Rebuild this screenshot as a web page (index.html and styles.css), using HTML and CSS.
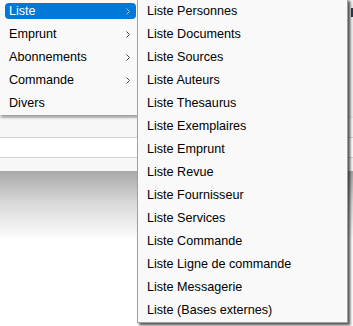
FILE: index.html
```html
<!DOCTYPE html>
<html lang="fr">
<head>
<meta charset="utf-8">
<title>Menu</title>
<link rel="stylesheet" href="styles.css">
</head>
<body>
<div class="page">
  <div class="toolbar"><span class="peek"></span></div>
  <div class="band band-light"></div>
  <div class="band band-white"></div>
  <div class="band band-light band-short"></div>
  <div class="fade"></div>
</div>

<ul class="menu main-menu">
  <li class="item active"><span>Liste</span><svg class="chev" viewBox="0 0 4 7" width="4" height="7"><path d="M0.5 0.5 L3.5 3.5 L0.5 6.5" fill="none" stroke="currentColor" stroke-width="1"/></svg></li>
  <li class="item"><span>Emprunt</span><svg class="chev" viewBox="0 0 4 7" width="4" height="7"><path d="M0.5 0.5 L3.5 3.5 L0.5 6.5" fill="none" stroke="currentColor" stroke-width="1"/></svg></li>
  <li class="item"><span>Abonnements</span><svg class="chev" viewBox="0 0 4 7" width="4" height="7"><path d="M0.5 0.5 L3.5 3.5 L0.5 6.5" fill="none" stroke="currentColor" stroke-width="1"/></svg></li>
  <li class="item"><span>Commande</span><svg class="chev" viewBox="0 0 4 7" width="4" height="7"><path d="M0.5 0.5 L3.5 3.5 L0.5 6.5" fill="none" stroke="currentColor" stroke-width="1"/></svg></li>
  <li class="item"><span>Divers</span></li>
</ul>

<ul class="menu sub-menu">
  <li class="sub-item">Liste Personnes</li>
  <li class="sub-item">Liste Documents</li>
  <li class="sub-item">Liste Sources</li>
  <li class="sub-item">Liste Auteurs</li>
  <li class="sub-item">Liste Thesaurus</li>
  <li class="sub-item">Liste Exemplaires</li>
  <li class="sub-item">Liste Emprunt</li>
  <li class="sub-item">Liste Revue</li>
  <li class="sub-item">Liste Fournisseur</li>
  <li class="sub-item">Liste Services</li>
  <li class="sub-item">Liste Commande</li>
  <li class="sub-item">Liste Ligne de commande</li>
  <li class="sub-item">Liste Messagerie</li>
  <li class="sub-item">Liste (Bases externes)</li>
</ul>
</body>
</html>
```
FILE: styles.css
```css
html, body {
  margin: 0;
  padding: 0;
  background: #ffffff;
  font-family: Tahoma, "Liberation Sans", Arial, sans-serif;
  font-size: 12.6px;
  color: #000;
  overflow: hidden;
}

.page {
  display: flex;
  flex-direction: column;
  width: 353px;
  height: 326px;
}

.toolbar {
  height: 117px;
  background: #f0f0f0;
  border-bottom: 1px solid #e0e0e0;
  display: flex;
  justify-content: flex-end;
  align-items: flex-start;
}

.peek {
  width: 2px;
  height: 9px;
  margin-top: 8px;
  background: #2a3a50;
}

.band {
  height: 19px;
  border-bottom: 1px solid #d4d4d4;
}

.band-light { background: #f7f7f7; }
.band-white { background: #ffffff; }
.band-short { height: 13px; border-bottom: none; }

.fade {
  height: 70px;
  background: linear-gradient(#a8a8a8, #d8d8d8 45%, #ffffff);
}

.menu {
  list-style: none;
  margin: 0;
  padding: 0;
  position: absolute;
  background: #f9f9f9;
}

.main-menu {
  left: 0;
  top: 0;
  width: 137px;
  padding: 3px 0 4px;
  box-shadow: 1px 2px 3px rgba(0, 0, 0, 0.4);
  display: flex;
  flex-direction: column;
  gap: 7px;
}

.item {
  height: 16px;
  line-height: 16px;
  margin-left: 5px;
  margin-right: 1px;
  padding: 0 6px 0 4px;
  display: flex;
  align-items: center;
  justify-content: space-between;
  border-radius: 4px;
}

.item .chev {
  color: #444;
}

.item.active {
  background: #0078d7;
  color: #ffffff;
}

.item.active .chev {
  color: #9cc6ee;
}

.sub-menu {
  left: 137px;
  top: -1px;
  width: 209px;
  border: 1px solid #a0a0a0;
  box-shadow: 2px 2px 2px rgba(0, 0, 0, 0.55), 3px 3px 3px rgba(0, 0, 0, 0.2);
  display: flex;
  flex-direction: column;
}

.sub-item {
  height: 23px;
  line-height: 23px;
  padding-left: 9px;
  white-space: nowrap;
}
```
